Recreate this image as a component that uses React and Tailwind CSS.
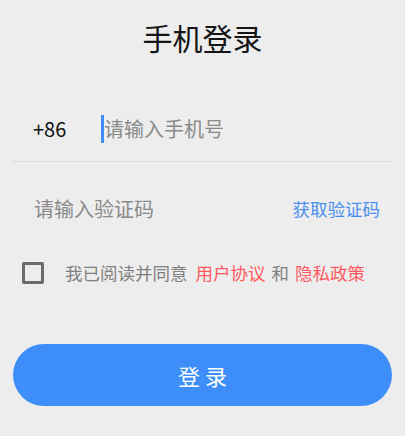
import React, { useState } from "react";

const font = { fontFamily: '"Noto Sans CJK SC", "Noto Sans", sans-serif' };

export default function App() {
  const [agreed, setAgreed] = useState(false);

  return (
    <div className="min-h-[436px] bg-[#ededed] px-[13px]" style={font}>
      <h1 className="pt-[17px] h-[58px] text-center text-[30px] leading-[40px] font-normal text-[#151515]">
        手机登录
      </h1>

      <div className="mt-[38px] h-[66px] flex items-center border-b border-[#dcdcdc] pl-[20px]">
        <span className="w-[68px] text-[20px] text-[#111]">+86</span>
        <span className="w-[3px] h-[28px] bg-[#3d8ef8]"></span>
        <span className="text-[20px] text-[#8a8a8a]">请输入手机号</span>
      </div>

      <div className="mt-[17px] h-[60px] flex items-center justify-between pl-[21px] pr-[12px]">
        <span className="text-[20px] text-[#8a8a8a]">请输入验证码</span>
        <span className="text-[17.5px] text-[#4a8ff0]">获取验证码</span>
      </div>

      <div className="h-[68px] flex items-center pl-[9px]">
        <button
          onClick={() => setAgreed(!agreed)}
          className="w-[22px] h-[22px] border-[3px] border-[#6b6b6b] rounded-[2px] flex items-center justify-center"
        >
          {agreed && <span className="w-[10px] h-[10px] bg-[#6b6b6b]"></span>}
        </button>
        <p className="ml-[21px] text-[17.5px] text-[#808080]">
          我已阅读并同意
          <span className="ml-[8px] text-[#ff5a5f]">用户协议</span>
          <span className="mx-[6px]">和</span>
          <span className="text-[#ff5a5f]">隐私政策</span>
        </p>
      </div>

      <button className="mt-[37px] w-full h-[62px] rounded-full bg-[#3d8ef8] text-white text-[22px]">
        登 录
      </button>
    </div>
  );
}
